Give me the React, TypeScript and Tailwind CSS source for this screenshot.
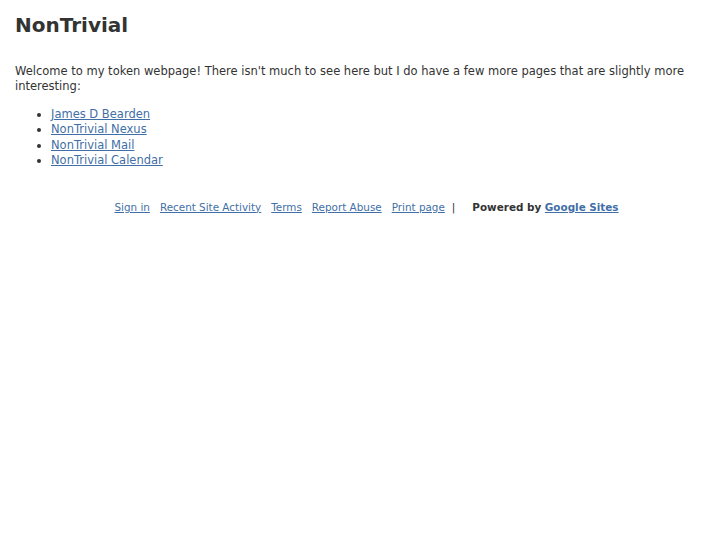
const links = ["James D Bearden", "NonTrivial Nexus", "NonTrivial Mail", "NonTrivial Calendar"];

const footer = ["Sign in", "Recent Site Activity", "Terms", "Report Abuse", "Print page"];

export default function App() {
  return (
    <div className="min-h-[545px] bg-white px-[15px] text-[#333] font-['DejaVu_Sans',sans-serif]">
      <h1 className="pt-[13px] text-[20px] font-bold leading-[24px]">NonTrivial</h1>
      <p className="mt-[27px] text-[11.5px] leading-[15px]">
        Welcome to my token webpage! There isn't much to see here but I do have a few more pages that are slightly more
        interesting:
      </p>
      <ul className="mt-[13px] list-disc pl-[36px] text-[11.5px] leading-[15.4px]">
        {links.map((l) => (
          <li key={l}>
            <a href="#" className="text-[#3f6fa6] underline">
              {l}
            </a>
          </li>
        ))}
      </ul>
      <div className="mt-[32px] flex justify-center pl-[6px] text-[10.4px] leading-[13px]">
        {footer.map((f) => (
          <a key={f} href="#" className="mr-[10px] text-[#3f6fa6] underline">
            {f}
          </a>
        ))}
        <span className="-ml-[3px]">|</span>
        <span className="ml-[17px] font-bold">
          Powered by{" "}
          <a href="#" className="text-[#3f6fa6] underline">
            Google Sites
          </a>
        </span>
      </div>
    </div>
  );
}
